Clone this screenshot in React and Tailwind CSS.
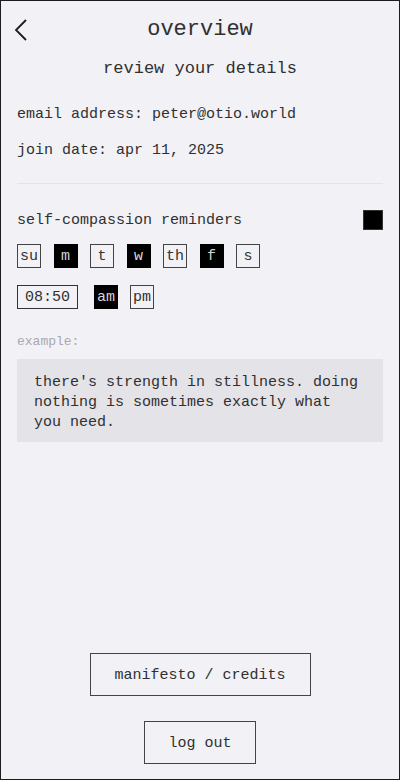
import React, { useState } from 'react';

const days = [
  { key: 'su', label: 'su' },
  { key: 'm', label: 'm' },
  { key: 't', label: 't' },
  { key: 'w', label: 'w' },
  { key: 'th', label: 'th' },
  { key: 'f', label: 'f' },
  { key: 's', label: 's' },
];

export default function App() {
  const [selectedDays, setSelectedDays] = useState(['m', 'w', 'f']);
  const [period, setPeriod] = useState('am');
  const [remindersOn, setRemindersOn] = useState(true);

  const toggleDay = (key) => {
    setSelectedDays((prev) =>
      prev.includes(key) ? prev.filter((d) => d !== key) : [...prev, key]
    );
  };

  return (
    <div className="h-[780px] w-full border border-[#1c1c1c] bg-[#f2f1f6] text-[#303030] flex flex-col font-['Liberation_Mono','DejaVu_Sans_Mono',monospace]">
      {/* header */}
      <div className="grid grid-cols-[1fr_auto_1fr] items-center px-[13px] pt-[15px]">
        <button className="justify-self-start w-6 h-7 flex items-center" aria-label="back">
          <svg width="14" height="22" viewBox="0 0 14 22" fill="none">
            <polyline points="12,1 2,11 12,21" stroke="#1c1c1c" strokeWidth="1.8" fill="none" />
          </svg>
        </button>
        <h1 className="text-[22px] leading-[28px]">overview</h1>
        <div />
      </div>

      <div className="px-4 flex flex-col">
        <h2 className="mt-[13px] text-center text-[17px] leading-6">review your details</h2>

        <p className="mt-[23px] text-[15px] leading-[22px]">email address: peter@otio.world</p>
        <p className="mt-[14px] text-[15px] leading-[22px]">join date: apr 11, 2025</p>

        <div className="mt-[21px] h-px bg-[#e4e3ea]" />

        <div className="mt-[24px] flex items-center justify-between">
          <span className="text-[15px] leading-[22px] pt-[2px]">self-compassion reminders</span>
          <button
            onClick={() => setRemindersOn(!remindersOn)}
            className={`w-5 h-5 border border-[#333] ${remindersOn ? 'bg-black' : 'bg-transparent'}`}
            aria-label="toggle reminders"
          />
        </div>

        <div className="mt-3 flex gap-[12.5px]">
          {days.map((day) => {
            const on = selectedDays.includes(day.key);
            return (
              <button
                key={day.key}
                onClick={() => toggleDay(day.key)}
                className={`w-6 h-6 flex items-center justify-center text-[15px] leading-none border ${
                  on ? 'bg-black border-black text-[#d6d6d6]' : 'border-[#444] text-[#333]'
                }`}
              >
                {day.label}
              </button>
            );
          })}
        </div>

        <div className="mt-[17px] flex items-center">
          <div className="w-[61px] h-6 border border-[#333] flex items-center justify-center text-[15px] leading-none">
            08:50
          </div>
          <button
            onClick={() => setPeriod('am')}
            className={`ml-4 w-6 h-6 flex items-center justify-center text-[15px] leading-none border ${
              period === 'am' ? 'bg-black border-black text-[#d6d6d6]' : 'border-[#444]'
            }`}
          >
            am
          </button>
          <button
            onClick={() => setPeriod('pm')}
            className={`ml-3 w-6 h-6 flex items-center justify-center text-[15px] leading-none border ${
              period === 'pm' ? 'bg-black border-black text-[#d6d6d6]' : 'border-[#444]'
            }`}
          >
            pm
          </button>
        </div>

        <p className="mt-6 text-[13px] leading-[18px] text-[#a9a9ae]">example:</p>

        <div className="mt-2 bg-[#e4e3e8] px-[17px] pt-[14px] pb-[9px] text-[15px] leading-5">
          there's strength in stillness. doing nothing is sometimes exactly what you need.
        </div>
      </div>

      {/* bottom actions */}
      <div className="mt-auto pb-[15px] flex flex-col items-center gap-[25px]">
        <button className="w-[221px] h-[43px] pt-[3px] border-[1.5px] border-[#444] text-[15px]">
          manifesto / credits
        </button>
        <button className="w-[112px] h-[43px] pt-[3px] border-[1.5px] border-[#444] text-[15px]">
          log out
        </button>
      </div>
    </div>
  );
}
